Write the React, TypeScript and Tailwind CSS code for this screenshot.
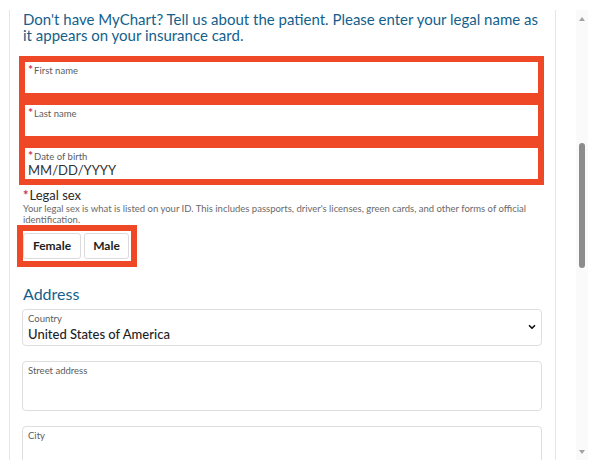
import { ChevronDown } from 'lucide-react'

function FieldLabel({ text, required }: { text: string; required?: boolean }) {
  return (
    <div className="flex h-[11px] items-start text-[9.5px] leading-[11px] text-[#5c5c5c]">
      {required && (
        <span className="mr-[1px] -mt-[1px] text-[12px] font-bold leading-[12px] text-[#c8354f]">*</span>
      )}
      <span>{text}</span>
    </div>
  )
}

function RedField({ label, value }: { label: string; value?: string }) {
  return (
    <div className="h-[31px] bg-white pl-[3px] pt-[3px]">
      <FieldLabel text={label} required />
      {value && <div className="mt-[1px] text-[13px] leading-[14px] text-[#333]">{value}</div>}
    </div>
  )
}

function Box({ label, value, height, select }: { label: string; value?: string; height: string; select?: boolean }) {
  return (
    <div className={`relative w-[520px] rounded-[4px] border border-[#dedede] bg-white pl-[5px] pt-[3px] ${height}`}>
      <FieldLabel text={label} />
      {value && (
        <div className="mt-[3px] text-[13px] font-medium leading-[15px] text-[#1e1e1e]">{value}</div>
      )}
      {select && (
        <ChevronDown className="absolute right-[4px] top-[12px] h-[10px] w-[10px] text-[#111]" strokeWidth={4} />
      )}
    </div>
  )
}

export default function App() {
  return (
    <div className="h-[466px] w-[600px] overflow-hidden bg-white font-['Lato',sans-serif]">
      <div className="mt-[10px] flex h-[450px]">
        <div className="ml-[9px] w-[547px] overflow-hidden border-x border-[#e6e6e6]">
          <div className="pl-[13px] pt-[1px]">
            <h2 className="w-[525px] text-[15px] leading-[16px] text-[#145f8c]">
              Don't have MyChart? Tell us about the patient. Please enter your legal name as it appears on your
              insurance card.
            </h2>

            <div className="mt-[13px] -ml-[4px] flex w-[525px] flex-col gap-[12px] bg-[#ef4826] p-[6px]">
              <RedField label="First name" />
              <RedField label="Last name" />
              <RedField label="Date of birth" value="MM/DD/YYYY" />
            </div>

            <div className="mt-[3px] flex items-start text-[13px] leading-[15px] text-[#2a2a2a]">
              <span className="mr-[1px] text-[13px] font-bold leading-[14px] text-[#c8354f]">*</span>
              <span>Legal sex</span>
            </div>
            <p className="w-[520px] text-[9.5px] leading-[11px] text-[#6a6a6a]">
              Your legal sex is what is listed on your ID. This includes passports, driver's licenses, green cards,
              and other forms of official identification.
            </p>

            <div className="-ml-[6px] w-[120px] bg-[#ef4826] p-[6px]">
              <div className="flex gap-[3px] bg-white py-[2px] pr-[2px]">
                <button
                  type="button"
                  className="h-[26px] w-[58px] rounded-[3px] border border-[#dcdcdc] text-[12px] font-bold text-[#1e1e1e]"
                >
                  Female
                </button>
                <button
                  type="button"
                  className="h-[26px] w-[45px] rounded-[3px] border border-[#dcdcdc] text-[12px] font-bold text-[#1e1e1e]"
                >
                  Male
                </button>
              </div>
            </div>

            <h3 className="mt-[17px] text-[16px] leading-[20px] text-[#145f8c]">Address</h3>

            <div className="mt-[5px] -ml-[1px] flex flex-col gap-[15px]">
              <Box label="Country" value="United States of America" height="h-[37px]" select />
              <Box label="Street address" height="h-[50px]" />
              <Box label="City" height="h-[50px]" />
            </div>
          </div>
        </div>

        <div className="ml-[20px] flex w-[12px] flex-col items-center bg-[#fafafa]">
          <svg className="mt-[6px] h-[6px] w-[8px]" viewBox="0 0 8 6" aria-hidden>
            <path d="M4 1 7 5H1z" fill="#a3a3a3" />
          </svg>
          <div className="mt-[121px] h-[125px] w-[6px] rounded-full bg-[#8c8c8c]" />
          <div className="flex-1" />
          <svg className="mb-[5px] h-[6px] w-[8px]" viewBox="0 0 8 6" aria-hidden>
            <path d="M1 1h6L4 5z" fill="#a3a3a3" />
          </svg>
        </div>
      </div>
    </div>
  )
}
